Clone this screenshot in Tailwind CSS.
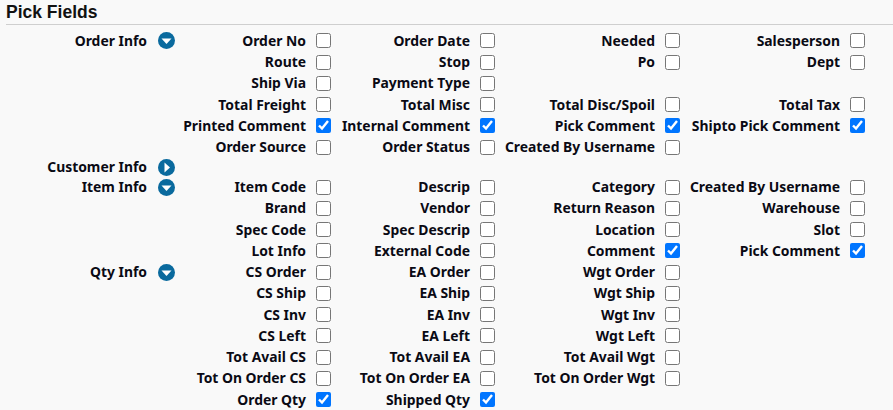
<!DOCTYPE html>
<html><head><meta charset="utf-8"><script src="https://cdn.jsdelivr.net/npm/@tailwindcss/browser@4"></script></head>
<body class="bg-[#f9f9f9] w-[893px] h-[410px] overflow-hidden font-['Noto_Sans',sans-serif] text-[13.9px] font-bold text-[#0a0a14]">
<div class="pl-[6px]">
<h2 class="h-[25px] border-b border-[#cfcfcf] font-['Liberation_Sans',sans-serif] text-[17.5px] font-bold leading-[25px] text-[#111]">Pick Fields</h2>
</div>
<div id="t" class="pt-[5.3px] leading-none">
<div class="flex items-center h-[21.25px]"><div class="w-[147px] text-right">Order Info</div><div class="w-[28px] flex justify-end"><svg width="17" height="17" viewBox="0 0 17 17"><circle cx="8.5" cy="8.5" r="8.5" fill="#0a6a9e"/><path d="M3.5 6.5h10l-5 5.5z" fill="#fff"/></svg></div>
<div class="w-[156px] flex justify-end items-center gap-[10px]"><span>Order No</span><input type="checkbox" class="w-[15px] h-[15px] m-0"></div><div class="w-[164px] flex justify-end items-center gap-[10px]"><span>Order Date</span><input type="checkbox" class="w-[15px] h-[15px] m-0"></div><div class="w-[185px] flex justify-end items-center gap-[10px]"><span>Needed</span><input type="checkbox" class="w-[15px] h-[15px] m-0"></div><div class="w-[185px] flex justify-end items-center gap-[10px]"><span>Salesperson</span><input type="checkbox" class="w-[15px] h-[15px] m-0"></div></div>
<div class="flex items-center h-[21.25px]"><div class="w-[175px]"></div>
<div class="w-[156px] flex justify-end items-center gap-[10px]"><span>Route</span><input type="checkbox" class="w-[15px] h-[15px] m-0"></div><div class="w-[164px] flex justify-end items-center gap-[10px]"><span>Stop</span><input type="checkbox" class="w-[15px] h-[15px] m-0"></div><div class="w-[185px] flex justify-end items-center gap-[10px]"><span>Po</span><input type="checkbox" class="w-[15px] h-[15px] m-0"></div><div class="w-[185px] flex justify-end items-center gap-[10px]"><span>Dept</span><input type="checkbox" class="w-[15px] h-[15px] m-0"></div></div>
<div class="flex items-center h-[21.25px]"><div class="w-[175px]"></div>
<div class="w-[156px] flex justify-end items-center gap-[10px]"><span>Ship Via</span><input type="checkbox" class="w-[15px] h-[15px] m-0"></div><div class="w-[164px] flex justify-end items-center gap-[10px]"><span>Payment Type</span><input type="checkbox" class="w-[15px] h-[15px] m-0"></div></div>
<div class="flex items-center h-[21.25px]"><div class="w-[175px]"></div>
<div class="w-[156px] flex justify-end items-center gap-[10px]"><span>Total Freight</span><input type="checkbox" class="w-[15px] h-[15px] m-0"></div><div class="w-[164px] flex justify-end items-center gap-[10px]"><span>Total Misc</span><input type="checkbox" class="w-[15px] h-[15px] m-0"></div><div class="w-[185px] flex justify-end items-center gap-[10px]"><span>Total Disc/Spoil</span><input type="checkbox" class="w-[15px] h-[15px] m-0"></div><div class="w-[185px] flex justify-end items-center gap-[10px]"><span>Total Tax</span><input type="checkbox" class="w-[15px] h-[15px] m-0"></div></div>
<div class="flex items-center h-[21.25px]"><div class="w-[175px]"></div>
<div class="w-[156px] flex justify-end items-center gap-[10px]"><span>Printed Comment</span><input type="checkbox" checked class="w-[15px] h-[15px] m-0"></div><div class="w-[164px] flex justify-end items-center gap-[10px]"><span>Internal Comment</span><input type="checkbox" checked class="w-[15px] h-[15px] m-0"></div><div class="w-[185px] flex justify-end items-center gap-[10px]"><span>Pick Comment</span><input type="checkbox" checked class="w-[15px] h-[15px] m-0"></div><div class="w-[185px] flex justify-end items-center gap-[10px]"><span>Shipto Pick Comment</span><input type="checkbox" checked class="w-[15px] h-[15px] m-0"></div></div>
<div class="flex items-center h-[21.25px]"><div class="w-[175px]"></div>
<div class="w-[156px] flex justify-end items-center gap-[10px]"><span>Order Source</span><input type="checkbox" class="w-[15px] h-[15px] m-0"></div><div class="w-[164px] flex justify-end items-center gap-[10px]"><span>Order Status</span><input type="checkbox" class="w-[15px] h-[15px] m-0"></div><div class="w-[185px] flex justify-end items-center gap-[10px]"><span>Created By Username</span><input type="checkbox" class="w-[15px] h-[15px] m-0"></div></div>
<div class="flex items-center h-[18.7px]"><div class="w-[147px] text-right">Customer Info</div><div class="w-[28px] flex justify-end"><svg width="17" height="17" viewBox="0 0 17 17"><circle cx="8.5" cy="8.5" r="8.5" fill="#0a6a9e"/><path d="M6.5 3.5v10l5.5-5z" fill="#fff"/></svg></div></div>
<div class="flex items-center h-[21.25px]"><div class="w-[147px] text-right">Item Info</div><div class="w-[28px] flex justify-end"><svg width="17" height="17" viewBox="0 0 17 17"><circle cx="8.5" cy="8.5" r="8.5" fill="#0a6a9e"/><path d="M3.5 6.5h10l-5 5.5z" fill="#fff"/></svg></div>
<div class="w-[156px] flex justify-end items-center gap-[10px]"><span>Item Code</span><input type="checkbox" class="w-[15px] h-[15px] m-0"></div><div class="w-[164px] flex justify-end items-center gap-[10px]"><span>Descrip</span><input type="checkbox" class="w-[15px] h-[15px] m-0"></div><div class="w-[185px] flex justify-end items-center gap-[10px]"><span>Category</span><input type="checkbox" class="w-[15px] h-[15px] m-0"></div><div class="w-[185px] flex justify-end items-center gap-[10px]"><span>Created By Username</span><input type="checkbox" class="w-[15px] h-[15px] m-0"></div></div>
<div class="flex items-center h-[21.25px]"><div class="w-[175px]"></div>
<div class="w-[156px] flex justify-end items-center gap-[10px]"><span>Brand</span><input type="checkbox" class="w-[15px] h-[15px] m-0"></div><div class="w-[164px] flex justify-end items-center gap-[10px]"><span>Vendor</span><input type="checkbox" class="w-[15px] h-[15px] m-0"></div><div class="w-[185px] flex justify-end items-center gap-[10px]"><span>Return Reason</span><input type="checkbox" class="w-[15px] h-[15px] m-0"></div><div class="w-[185px] flex justify-end items-center gap-[10px]"><span>Warehouse</span><input type="checkbox" class="w-[15px] h-[15px] m-0"></div></div>
<div class="flex items-center h-[21.25px]"><div class="w-[175px]"></div>
<div class="w-[156px] flex justify-end items-center gap-[10px]"><span>Spec Code</span><input type="checkbox" class="w-[15px] h-[15px] m-0"></div><div class="w-[164px] flex justify-end items-center gap-[10px]"><span>Spec Descrip</span><input type="checkbox" class="w-[15px] h-[15px] m-0"></div><div class="w-[185px] flex justify-end items-center gap-[10px]"><span>Location</span><input type="checkbox" class="w-[15px] h-[15px] m-0"></div><div class="w-[185px] flex justify-end items-center gap-[10px]"><span>Slot</span><input type="checkbox" class="w-[15px] h-[15px] m-0"></div></div>
<div class="flex items-center h-[21.25px]"><div class="w-[175px]"></div>
<div class="w-[156px] flex justify-end items-center gap-[10px]"><span>Lot Info</span><input type="checkbox" class="w-[15px] h-[15px] m-0"></div><div class="w-[164px] flex justify-end items-center gap-[10px]"><span>External Code</span><input type="checkbox" class="w-[15px] h-[15px] m-0"></div><div class="w-[185px] flex justify-end items-center gap-[10px]"><span>Comment</span><input type="checkbox" checked class="w-[15px] h-[15px] m-0"></div><div class="w-[185px] flex justify-end items-center gap-[10px]"><span>Pick Comment</span><input type="checkbox" checked class="w-[15px] h-[15px] m-0"></div></div>
<div class="flex items-center h-[21.25px]"><div class="w-[147px] text-right">Qty Info</div><div class="w-[28px] flex justify-end"><svg width="17" height="17" viewBox="0 0 17 17"><circle cx="8.5" cy="8.5" r="8.5" fill="#0a6a9e"/><path d="M3.5 6.5h10l-5 5.5z" fill="#fff"/></svg></div>
<div class="w-[156px] flex justify-end items-center gap-[10px]"><span>CS Order</span><input type="checkbox" class="w-[15px] h-[15px] m-0"></div><div class="w-[164px] flex justify-end items-center gap-[10px]"><span>EA Order</span><input type="checkbox" class="w-[15px] h-[15px] m-0"></div><div class="w-[185px] flex justify-end items-center gap-[10px]"><span>Wgt Order</span><input type="checkbox" class="w-[15px] h-[15px] m-0"></div></div>
<div class="flex items-center h-[21.25px]"><div class="w-[175px]"></div>
<div class="w-[156px] flex justify-end items-center gap-[10px]"><span>CS Ship</span><input type="checkbox" class="w-[15px] h-[15px] m-0"></div><div class="w-[164px] flex justify-end items-center gap-[10px]"><span>EA Ship</span><input type="checkbox" class="w-[15px] h-[15px] m-0"></div><div class="w-[185px] flex justify-end items-center gap-[10px]"><span>Wgt Ship</span><input type="checkbox" class="w-[15px] h-[15px] m-0"></div></div>
<div class="flex items-center h-[21.25px]"><div class="w-[175px]"></div>
<div class="w-[156px] flex justify-end items-center gap-[10px]"><span>CS Inv</span><input type="checkbox" class="w-[15px] h-[15px] m-0"></div><div class="w-[164px] flex justify-end items-center gap-[10px]"><span>EA Inv</span><input type="checkbox" class="w-[15px] h-[15px] m-0"></div><div class="w-[185px] flex justify-end items-center gap-[10px]"><span>Wgt Inv</span><input type="checkbox" class="w-[15px] h-[15px] m-0"></div></div>
<div class="flex items-center h-[21.25px]"><div class="w-[175px]"></div>
<div class="w-[156px] flex justify-end items-center gap-[10px]"><span>CS Left</span><input type="checkbox" class="w-[15px] h-[15px] m-0"></div><div class="w-[164px] flex justify-end items-center gap-[10px]"><span>EA Left</span><input type="checkbox" class="w-[15px] h-[15px] m-0"></div><div class="w-[185px] flex justify-end items-center gap-[10px]"><span>Wgt Left</span><input type="checkbox" class="w-[15px] h-[15px] m-0"></div></div>
<div class="flex items-center h-[21.25px]"><div class="w-[175px]"></div>
<div class="w-[156px] flex justify-end items-center gap-[10px]"><span>Tot Avail CS</span><input type="checkbox" class="w-[15px] h-[15px] m-0"></div><div class="w-[164px] flex justify-end items-center gap-[10px]"><span>Tot Avail EA</span><input type="checkbox" class="w-[15px] h-[15px] m-0"></div><div class="w-[185px] flex justify-end items-center gap-[10px]"><span>Tot Avail Wgt</span><input type="checkbox" class="w-[15px] h-[15px] m-0"></div></div>
<div class="flex items-center h-[21.25px]"><div class="w-[175px]"></div>
<div class="w-[156px] flex justify-end items-center gap-[10px]"><span>Tot On Order CS</span><input type="checkbox" class="w-[15px] h-[15px] m-0"></div><div class="w-[164px] flex justify-end items-center gap-[10px]"><span>Tot On Order EA</span><input type="checkbox" class="w-[15px] h-[15px] m-0"></div><div class="w-[185px] flex justify-end items-center gap-[10px]"><span>Tot On Order Wgt</span><input type="checkbox" class="w-[15px] h-[15px] m-0"></div></div>
<div class="flex items-center h-[21.25px]"><div class="w-[175px]"></div>
<div class="w-[156px] flex justify-end items-center gap-[10px]"><span>Order Qty</span><input type="checkbox" checked class="w-[15px] h-[15px] m-0"></div><div class="w-[164px] flex justify-end items-center gap-[10px]"><span>Shipped Qty</span><input type="checkbox" checked class="w-[15px] h-[15px] m-0"></div></div>
</div>
</body></html>
